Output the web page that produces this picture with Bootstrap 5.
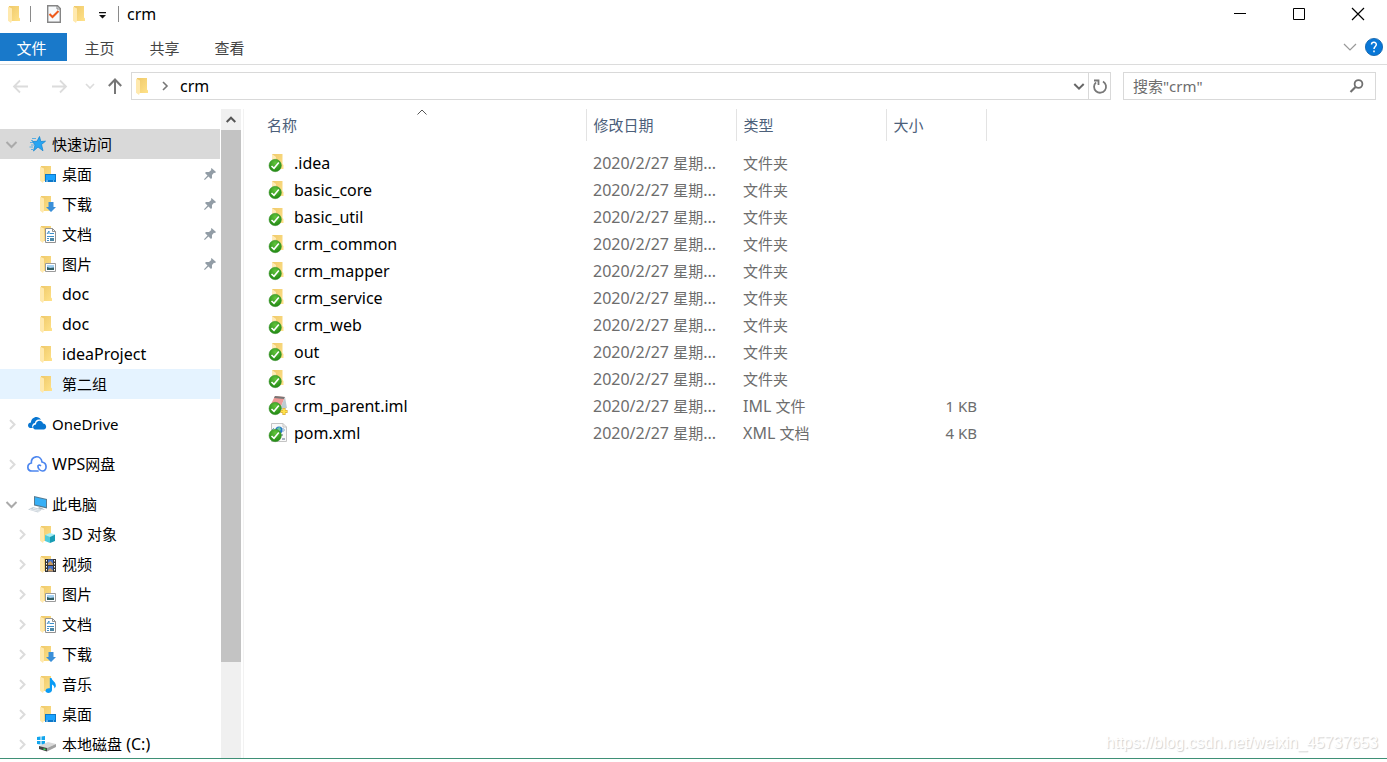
<!DOCTYPE html>
<html lang="zh-CN">
<head>
<meta charset="utf-8">
<meta name="viewport" content="width=device-width, initial-scale=1">
<title>crm</title>
<link href="https://cdn.jsdelivr.net/npm/bootstrap@5.3.0/dist/css/bootstrap.min.css" rel="stylesheet">
<style>
  body { font-family: "Noto Sans", "Noto Sans CJK SC", sans-serif; font-size: 15px; line-height: 20px; color: #000; background: #fff; }
  svg { display: block; flex: none; overflow: visible; }
  symbol { overflow: visible; }
  a { color: inherit; text-decoration: none; }
  button { border: 0; background: none; padding: 0; color: inherit; }
  .latin { font-size: 16px; }
  .explorer { border-bottom: 1px solid #3f9076; height: calc(100vh - 3px); }

  .title-row { height: 28px; padding-left: 8px; }
  .divider { width: 1px; height: 16px; background: #8a8a8a; }
  .win-btn { width: 59px; height: 28px; display: grid; place-items: center; }

  .ribbon { height: 37px; padding-top: 5px; border-bottom: 1px solid #dcdcdc; color: #444; }
  .ribbon-tab { height: 28px; width: 65px; line-height: 30px; text-align: center; }
  .ribbon-tab.file-tab { width: 67px; background: #1979ca; color: #fff; padding-right: 4px; }

  .address-row { height: 44px; padding: 7px 11px 9px 13px; }
  .box { height: 28px; border: 1px solid #d9d9d9; }
  .search-box { width: 253px; margin-left: 12px; }
  .search-box input { border: 0; outline: 0; padding: 0 0 0 9px; min-width: 0; color: #6d6d6d; }
  .search-box input::placeholder { color: #6d6d6d; opacity: 1; }
  .refresh { width: 22px; height: 26px; border-left: 1px solid #d9d9d9; display: grid; place-items: center; }

  .side { width: 241px; }
  .tree { width: 220px; padding-top: 20px; }
  .tree-group { margin-bottom: 10px; }
  .tree-row { height: 30px; padding-left: 5px; }
  .tree-row.child { padding-left: 16px; }
  .tree-row .chev { width: 14px; height: 14px; margin-right: 8px; }
  .tree-row.child .chev { width: 12px; margin-right: 12px; }
  .tree-row .ico { width: 18px; height: 18px; margin-right: 4px; }
  .tree-row .big { width: 20px; height: 18px; margin-right: 5px; }
  .tree-row.selected { background: #d9d9d9; }
  .tree-row.hovered { background: #e5f3ff; }
  .pin { width: 12px; height: 12px; margin-right: 4px; }
  .scroll-track { width: 20px; background: #f0f0f0; }
  .scroll-track button { height: 21px; display: grid; place-items: center; }
  .scroll-thumb { height: 82%; background: #c3c3c3; }

  .pane { border-left: 1px solid #f2f2f2; margin-left: 2px; }
  .files { table-layout: fixed; width: 100%; }
  .files th { height: 32px; font-weight: 400; color: #4c607a; border-right: 1px solid #e3e3e3; padding: 0 7px; }
  .files th:first-child { padding-left: 23px; }
  .files th:last-child { border: 0; }
  .files tbody::before { content: ""; display: block; height: 8px; }
  .files td { height: 27px; padding: 0 7px; color: #6d6d6d; white-space: nowrap; overflow: hidden; }
  .files td:first-child { padding-left: 24px; color: #000; }
  .files td:nth-child(4) { text-align: right; padding-right: 9px; }
  .files td svg { width: 20px; height: 20px; margin-right: 6px; }
  .c-name { width: 342px; } .c-mid { width: 150px; } .c-size { width: 100px; }
  .sort-mark { top: 0; left: 173px; }
  .watermark { right: 9px; bottom: 3px; font: 16px/24px "Liberation Sans", sans-serif; color: #fff; text-shadow: 1px 1px 1px #d0d0d0; }
</style>
</head>
<body>
<svg width="0" height="0" class="position-absolute" aria-hidden="true">
  <defs>
    <linearGradient id="gold" x1="0" x2="1" y1="0" y2="1"><stop offset="0" stop-color="#efc96a"/><stop offset="1" stop-color="#ffe28a"/></linearGradient>
    <radialGradient id="leaf" cx=".5" cy=".3" r=".75"><stop offset="0" stop-color="#62c43c"/><stop offset="1" stop-color="#1b8310"/></radialGradient>
    <symbol id="folder" viewBox="0 0 18 18"><path d="M1 1H11V12.500L12 13.500V16H1z" fill="url(#gold)"/><path d="M0 1.500L4 3.500V15.500L3 18L0 15.800z" fill="#ffe9ae"/></symbol>
    <symbol id="desk" viewBox="0 0 18 18"><use href="#folder"/><path d="M5 9H16V17H5z" fill="#0b78c9"/><path d="M6 10H15V15H6z" fill="#1aa3ff"/><path d="M6 16H8M13 16h1" stroke="#bfe6ff"/></symbol>
    <symbol id="down" viewBox="0 0 18 18"><use href="#folder"/><path d="M8.500 7H13.500V12H16L11 17L6 12H8.500z" fill="#3a8fd9"/></symbol>
    <symbol id="doc" viewBox="0 0 18 18"><use href="#folder"/><path d="M5.500 3.500H12.500L15.500 6.500V17.500H5.500z" fill="#fff" stroke="#919191"/><path d="M12.500 3.500V6.500H15.500" fill="none" stroke="#919191"/><path d="M7 9L9 6V9M10 8.500H14M7 11.500H14M7 13.500H9M7 15.500H9" fill="none" stroke="#3e8fc9"/><path d="M10 13H14V16H10z" fill="#4c87a5"/></symbol>
    <symbol id="pic" viewBox="0 0 18 18"><use href="#folder"/><path d="M5.500 8.500H15.500V16.500H5.500z" fill="#fff" stroke="#9b9b9b"/><path d="M7 10H14V15H7z" fill="#a5d2f3"/><path d="M7 12L10 13L14 12.500V15H7z" fill="#315f65"/></symbol>
    <symbol id="cube" viewBox="0 0 18 18"><use href="#folder"/><path d="M5 10L10 8L15 9.500L10 12z" fill="#a5eff7"/><path d="M5 10L10 12V18L5 16z" fill="#4fcbdc"/><path d="M10 12L15 9.500V16L10 18z" fill="#179cb4"/></symbol>
    <symbol id="film" viewBox="0 0 18 18"><use href="#folder"/><path d="M5 4H16V17H5z" fill="#343434"/><path d="M8 4.500H13V10H8zM8 11H13V16.500H8z" fill="#4473c9"/><path d="M8 8L10.500 6L13 9V10H8zM8 15L10 13L13 15.500V16.500H8z" fill="#c79a61"/><path d="M6.500 5V17M14.500 5V17" stroke="#fff" stroke-dasharray="1.500 1.500"/></symbol>
    <symbol id="music" viewBox="0 0 18 18"><use href="#folder"/><path d="M9.800 3H11.500C12 6 16.500 7 15.800 11.500L14.500 13.500C14.500 11 13 9.800 12 9.500V15C12 18.500 5.500 19 5.500 15.800C5.600 13.300 8.500 12.800 9.800 13.300z" fill="#0a9bf5"/></symbol>
    <symbol id="drive" viewBox="0 0 18 18"><path d="M-3 2L.5 1.600V5H-3zM1.500 1.500L5 1V5H1.500zM-3 6H.5V9.500L-3 9zM1.500 6H5V10L1.500 9.600z" fill="#12a5ed"/><path d="M-1 11L8 7L16 9L7 13z" fill="#d9d9d9"/><path d="M-1 11L7 13V16.500L-1 14z" fill="#454545"/><path d="M7 13L16 9V12L7 16.500z" fill="#a1a1a1"/><path d="M3.500 14L5.500 14.600" stroke="#37e957" stroke-width="1.500"/></symbol>
    <symbol id="star" viewBox="0 0 20 18"><path d="M12.500 1.500L13.800 6.500L18.500 6.200L14.500 9.500L16 15.800L11 12L6.500 16L8 10L5.500 6.500L10 6.300z" fill="#27a5f2" stroke="#1789d4" stroke-width=".8"/><path d="M5 3.500H9M4 5.500H6M3 7.500H6M4 10H7M2.500 12H6M4 14.500H6" stroke="#3ba5e3" stroke-width=".8"/></symbol>
    <symbol id="onedrive" viewBox="0 0 20 18"><path d="M6 13H3C0 12 .5 7.500 4 7.500C4 2.500 11-.5 14 5C10 3.500 8 6.500 8 8C5 8.500 4.500 11.500 6 13z" fill="#0876d1"/><path d="M8.500 14.500C5 14 5.500 9.500 9 9.500C9 5 15 4.500 16 8.500C19.500 8.500 20.500 13.500 17 14.500z" fill="#0876d1"/></symbol>
    <symbol id="wps" viewBox="0 0 20 18"><path d="M11 16H5C-.5 16-.3 9 4.300 8C3.500 .5 14-.7 15 7C20.500 8 20.200 16 15.500 16C13.500 16 11.500 14 11 12C10.500 10.300 12.500 9.500 13.500 10.500" fill="none" stroke="#4c86ef" stroke-width="1.700" stroke-linecap="round"/></symbol>
    <symbol id="pc" viewBox="0 0 20 18"><path d="M7 1L20 4V13.500L7 10.500z" fill="#567b91"/><path d="M8 2.300L19 4.800V12L8 9.500z" fill="#36b0f7"/><path d="M12 12L15 13L18 15L11 13.500z" fill="#a6b6c0"/><path d="M1 14.500L6 12L15 14.500L11 17.500z" fill="#c5cfd7"/><path d="M3 14.500L12 16.300M6 13.300L13 15.200" stroke="#fff" stroke-width=".6"/></symbol>
    <symbol id="right" viewBox="0 0 12 14"><path d="M4 3L8.500 7.500L4 12" fill="none" stroke="#dcdcdc" stroke-width="2"/></symbol>
    <symbol id="open" viewBox="0 0 14 14"><path d="M1.500 5L6.500 10L11.500 5" fill="none" stroke="#aaa" stroke-width="2"/></symbol>
    <symbol id="pinned" viewBox="0 0 12 12"><path d="M7.500 0L12 4L11 5L10 4.800L8 7V10L7 11L4.500 8.500L.8 12L0 11.200L3.500 7.500L1 5L2 4H5L7.300 2L7 1z" fill="#929da6"/></symbol>
    <symbol id="ok" viewBox="0 0 20 20"><circle cx="7.200" cy="12.500" r="6.200" fill="url(#leaf)" stroke="#3d9130" stroke-width=".5"/><path d="M3.500 13L6 15.300L10.800 9.500" fill="none" stroke="#fff" stroke-width="1.600"/></symbol>
    <symbol id="okdir" viewBox="0 0 20 20"><path d="M4 1H14.500V11L15.500 12V16H4z" fill="url(#gold)"/><path d="M4 1L8 4V15H4z" fill="#ffebb7"/><use href="#ok"/></symbol>
    <symbol id="okiml" viewBox="0 0 20 20"><path d="M7 0L17 1L12 13L2 10z" fill="#ee9a96"/><path d="M7 0L17 1L16 3L6 2z" fill="#777"/><path d="M17 1L19 12L12 13z" fill="#bccbd2"/><use href="#ok"/><path d="M16 12V19M12.500 15.500H19.500" stroke="#c99a2a" stroke-width="3"/><path d="M16 12.500V18.500M13 15.500H19" stroke="#ffe04a" stroke-width="2"/></symbol>
    <symbol id="okxml" viewBox="0 0 20 20"><path d="M3.500 .5H15L18.500 4V18.500H3.500z" fill="#f8f8f8" stroke="#c4c4c4"/><path d="M15 .5V4H18.500" fill="none" stroke="#c4c4c4"/><circle cx="11" cy="7" r="3.600" fill="#2878c8"/><path d="M9 5L12 4L13 7L10 9z" fill="#65c8a0"/><path d="M6 5L4 7L6 9M14.500 5L16.500 7L14.500 9" fill="none" stroke="#7aa5c7"/><path d="M13 11H15V13H13zM14 15H17V17H14z" fill="#a6b0bf"/><use href="#ok"/></symbol>
  </defs>
</svg>

<div class="explorer d-flex flex-column position-relative overflow-hidden">
  <header>
    <div class="title-row d-flex align-items-center">
      <svg width="18" height="18"><use href="#folder"/></svg>
      <span class="divider ms-1 me-3"></span>
      <button type="button" aria-label="属性"><svg width="14" height="18" viewBox="0 0 14 18"><path d="M.7 .7H10.500L13.300 3.500V17.300H.7z" fill="#f7f9fb" stroke="#858585" stroke-width="1.400"/><path d="M10 1V4H13" fill="none" stroke="#858585"/><path d="M2.500 9L5.500 12L11.500 6" fill="none" stroke="#ee5a1c" stroke-width="2"/></svg></button>
      <button type="button" class="ms-2 ps-1" aria-label="新建文件夹"><svg width="18" height="18"><use href="#folder"/></svg></button>
      <button type="button" class="ms-2 me-1" aria-label="自定义快速访问工具栏"><svg width="7" height="7" viewBox="0 0 7 7"><path d="M0 1H7V2.200H0zM0 4H7L3.500 7.500z" fill="#111"/></svg></button>
      <span class="divider mx-2"></span>
      <span class="latin">crm</span>
      <div class="ms-auto d-flex">
        <button type="button" class="win-btn" aria-label="最小化"><svg width="12" height="12"><path d="M0 5.500H12" stroke="#000"/></svg></button>
        <button type="button" class="win-btn" aria-label="最大化"><svg width="12" height="12"><path d="M.5 .5H11.500V11.500H.5z" fill="none" stroke="#000"/></svg></button>
        <button type="button" class="win-btn" aria-label="关闭"><svg width="12" height="12"><path d="M0 0L12 12M12 0L0 12" stroke="#000" stroke-width="1.200"/></svg></button>
      </div>
    </div>
    <nav class="ribbon d-flex">
      <a href="#" class="ribbon-tab file-tab">文件</a>
      <a href="#" class="ribbon-tab">主页</a>
      <a href="#" class="ribbon-tab">共享</a>
      <a href="#" class="ribbon-tab">查看</a>
      <div class="ms-auto d-flex align-items-center pe-1 pb-1">
        <button type="button" class="me-2" aria-label="展开功能区"><svg width="14" height="8"><path d="M1 1L7 7L13 1" fill="none" stroke="#999" stroke-width="1.200"/></svg></button>
        <button type="button" aria-label="帮助"><svg width="18" height="18"><circle cx="9" cy="9" r="8.600" fill="#0877d7" stroke="#0a5ea8" stroke-width=".8"/><path d="M6.500 6.500C6.700 3.500 11.500 3.700 11.300 6.700C11.200 8.500 9 8.500 9 11M9 12.500V14.300" fill="none" stroke="#fff" stroke-width="1.500"/></svg></button>
      </div>
    </nav>
    <div class="address-row d-flex align-items-center">
      <button type="button" aria-label="后退"><svg width="15" height="14"><path d="M15 7.500H1M7 1.500L1 7.500L7 13.500" fill="none" stroke="#dcdcdc" stroke-width="1.800"/></svg></button>
      <button type="button" class="ms-4" aria-label="前进"><svg width="15" height="14"><path d="M0 7.500H14M8 1.500L14 7.500L8 13.500" fill="none" stroke="#dcdcdc" stroke-width="1.800"/></svg></button>
      <button type="button" class="ms-3 pe-1" aria-label="最近浏览的位置"><svg width="10" height="6"><path d="M3 1L7 5L11 1" fill="none" stroke="#dcdcdc" stroke-width="1.600"/></svg></button>
      <button type="button" class="ms-2 me-2 ps-1" aria-label="上移"><svg width="14" height="16"><path d="M6 16V1.500M-.2 8L6 1.500L12.200 8" fill="none" stroke="#777" stroke-width="2"/></svg></button>
      <div class="box flex-grow-1 d-flex align-items-center ps-1">
        <svg width="18" height="18"><use href="#folder"/></svg>
        <svg class="ms-2 me-2" width="6" height="10"><path d="M1 1L5 5L1 9" fill="none" stroke="#777" stroke-width="1.600"/></svg>
        <a href="#" class="latin ps-1">crm</a>
        <button type="button" class="ms-auto me-1" aria-label="以前的位置"><svg width="11" height="8"><path d="M1.300 2L6 6.700L10.700 2" fill="none" stroke="#666" stroke-width="2"/></svg></button>
        <button type="button" class="refresh" aria-label="刷新"><svg width="14" height="15"><path d="M10 2.500A6 6 0 1 1 3 3.300M1 1.500H5.500V6" fill="none" stroke="#777" stroke-width="1.800"/></svg></button>
      </div>
      <form class="box search-box d-flex align-items-center" role="search">
        <input class="flex-grow-1" type="text" placeholder='搜索"crm"' aria-label="搜索">
        <button type="button" class="px-2 me-1" aria-label="搜索"><svg width="14" height="14"><circle cx="9.500" cy="5" r="3.900" fill="none" stroke="#707070" stroke-width="1.800"/><path d="M6.500 8L1.500 13" stroke="#707070" stroke-width="2.200"/></svg></button>
      </form>
    </div>
  </header>

  <main class="d-flex flex-grow-1 overflow-hidden">
    <aside class="side d-flex flex-shrink-0">
      <nav class="tree flex-shrink-0 overflow-hidden me-auto">
        <div class="tree-group">
          <a href="#" class="tree-row selected d-flex align-items-center"><svg class="chev"><use href="#open"/></svg><svg class="big"><use href="#star"/></svg>快速访问</a>
          <a href="#" class="tree-row child d-flex align-items-center"><span class="chev"></span><svg class="ico"><use href="#desk"/></svg>桌面<svg class="pin ms-auto"><use href="#pinned"/></svg></a>
          <a href="#" class="tree-row child d-flex align-items-center"><span class="chev"></span><svg class="ico"><use href="#down"/></svg>下载<svg class="pin ms-auto"><use href="#pinned"/></svg></a>
          <a href="#" class="tree-row child d-flex align-items-center"><span class="chev"></span><svg class="ico"><use href="#doc"/></svg>文档<svg class="pin ms-auto"><use href="#pinned"/></svg></a>
          <a href="#" class="tree-row child d-flex align-items-center"><span class="chev"></span><svg class="ico"><use href="#pic"/></svg>图片<svg class="pin ms-auto"><use href="#pinned"/></svg></a>
          <a href="#" class="tree-row child d-flex align-items-center latin"><span class="chev"></span><svg class="ico"><use href="#folder"/></svg>doc</a>
          <a href="#" class="tree-row child d-flex align-items-center latin"><span class="chev"></span><svg class="ico"><use href="#folder"/></svg>doc</a>
          <a href="#" class="tree-row child d-flex align-items-center latin"><span class="chev"></span><svg class="ico"><use href="#folder"/></svg>ideaProject</a>
          <a href="#" class="tree-row child hovered d-flex align-items-center"><span class="chev"></span><svg class="ico"><use href="#folder"/></svg>第二组</a>
        </div>
        <div class="tree-group"><a href="#" class="tree-row d-flex align-items-center"><svg class="chev"><use href="#right"/></svg><svg class="big"><use href="#onedrive"/></svg>OneDrive</a></div>
        <div class="tree-group"><a href="#" class="tree-row d-flex align-items-center"><svg class="chev"><use href="#right"/></svg><svg class="big"><use href="#wps"/></svg><span><span class="latin">WPS</span>网盘</span></a></div>
        <div>
          <a href="#" class="tree-row d-flex align-items-center"><svg class="chev"><use href="#open"/></svg><svg class="big"><use href="#pc"/></svg>此电脑</a>
          <a href="#" class="tree-row child d-flex align-items-center"><svg class="chev"><use href="#right"/></svg><svg class="ico"><use href="#cube"/></svg><span><span class="latin">3D </span>对象</span></a>
          <a href="#" class="tree-row child d-flex align-items-center"><svg class="chev"><use href="#right"/></svg><svg class="ico"><use href="#film"/></svg>视频</a>
          <a href="#" class="tree-row child d-flex align-items-center"><svg class="chev"><use href="#right"/></svg><svg class="ico"><use href="#pic"/></svg>图片</a>
          <a href="#" class="tree-row child d-flex align-items-center"><svg class="chev"><use href="#right"/></svg><svg class="ico"><use href="#doc"/></svg>文档</a>
          <a href="#" class="tree-row child d-flex align-items-center"><svg class="chev"><use href="#right"/></svg><svg class="ico"><use href="#down"/></svg>下载</a>
          <a href="#" class="tree-row child d-flex align-items-center"><svg class="chev"><use href="#right"/></svg><svg class="ico"><use href="#music"/></svg>音乐</a>
          <a href="#" class="tree-row child d-flex align-items-center"><svg class="chev"><use href="#right"/></svg><svg class="ico"><use href="#desk"/></svg>桌面</a>
          <a href="#" class="tree-row child d-flex align-items-center"><svg class="chev"><use href="#right"/></svg><svg class="ico"><use href="#drive"/></svg><span>本地磁盘<span class="latin"> (C:)</span></span></a>
        </div>
      </nav>
      <div class="scroll-track d-flex flex-column">
        <button type="button" aria-label="向上滚动"><svg width="10" height="7"><path d="M.7 6L5 1.700L9.300 6" fill="none" stroke="#555" stroke-width="2"/></svg></button>
        <div class="scroll-thumb"></div>
      </div>
    </aside>

    <section class="pane flex-grow-1 position-relative">
      <svg class="sort-mark position-absolute" width="10" height="6"><path d="M.5 5.500L5 1L9.500 5.500" fill="none" stroke="#555"/></svg>
      <table class="files">
        <colgroup><col class="c-name"><col class="c-mid"><col class="c-mid"><col class="c-size"><col></colgroup>
        <thead><tr><th>名称</th><th>修改日期</th><th>类型</th><th>大小</th><th></th></tr></thead>
        <tbody>
          <tr><td><a href="#" class="latin d-flex align-items-center"><svg><use href="#okdir"/></svg>.idea</a></td><td><span class="latin">2020/2/27 </span>星期<span class="latin">...</span></td><td>文件夹</td><td></td><td></td></tr>
          <tr><td><a href="#" class="latin d-flex align-items-center"><svg><use href="#okdir"/></svg>basic_core</a></td><td><span class="latin">2020/2/27 </span>星期<span class="latin">...</span></td><td>文件夹</td><td></td><td></td></tr>
          <tr><td><a href="#" class="latin d-flex align-items-center"><svg><use href="#okdir"/></svg>basic_util</a></td><td><span class="latin">2020/2/27 </span>星期<span class="latin">...</span></td><td>文件夹</td><td></td><td></td></tr>
          <tr><td><a href="#" class="latin d-flex align-items-center"><svg><use href="#okdir"/></svg>crm_common</a></td><td><span class="latin">2020/2/27 </span>星期<span class="latin">...</span></td><td>文件夹</td><td></td><td></td></tr>
          <tr><td><a href="#" class="latin d-flex align-items-center"><svg><use href="#okdir"/></svg>crm_mapper</a></td><td><span class="latin">2020/2/27 </span>星期<span class="latin">...</span></td><td>文件夹</td><td></td><td></td></tr>
          <tr><td><a href="#" class="latin d-flex align-items-center"><svg><use href="#okdir"/></svg>crm_service</a></td><td><span class="latin">2020/2/27 </span>星期<span class="latin">...</span></td><td>文件夹</td><td></td><td></td></tr>
          <tr><td><a href="#" class="latin d-flex align-items-center"><svg><use href="#okdir"/></svg>crm_web</a></td><td><span class="latin">2020/2/27 </span>星期<span class="latin">...</span></td><td>文件夹</td><td></td><td></td></tr>
          <tr><td><a href="#" class="latin d-flex align-items-center"><svg><use href="#okdir"/></svg>out</a></td><td><span class="latin">2020/2/27 </span>星期<span class="latin">...</span></td><td>文件夹</td><td></td><td></td></tr>
          <tr><td><a href="#" class="latin d-flex align-items-center"><svg><use href="#okdir"/></svg>src</a></td><td><span class="latin">2020/2/27 </span>星期<span class="latin">...</span></td><td>文件夹</td><td></td><td></td></tr>
          <tr><td><a href="#" class="latin d-flex align-items-center"><svg><use href="#okiml"/></svg>crm_parent.iml</a></td><td><span class="latin">2020/2/27 </span>星期<span class="latin">...</span></td><td><span class="latin">IML </span>文件</td><td>1 KB</td><td></td></tr>
          <tr><td><a href="#" class="latin d-flex align-items-center"><svg><use href="#okxml"/></svg>pom.xml</a></td><td><span class="latin">2020/2/27 </span>星期<span class="latin">...</span></td><td><span class="latin">XML </span>文档</td><td>4 KB</td><td></td></tr>
        </tbody>
      </table>
      <div class="watermark position-absolute">https://blog.csdn.net/weixin_45737653</div>
    </section>
  </main>
</div>
<script src="https://cdn.jsdelivr.net/npm/bootstrap@5.3.0/dist/js/bootstrap.bundle.min.js"></script>
</body>
</html>
